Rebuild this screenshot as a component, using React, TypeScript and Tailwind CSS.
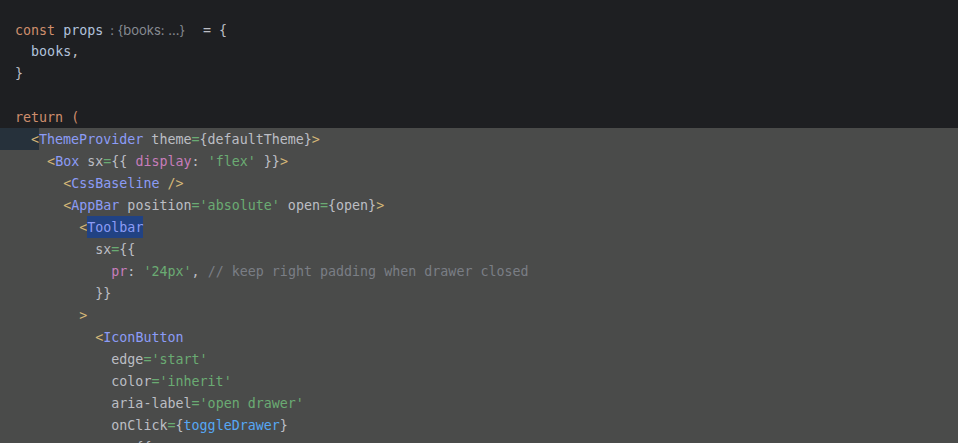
import React from 'react';

type Tok = [string, string];

// token colours (JetBrains dark)
const kw = 'text-[#cf8e6d]';
const vr = 'text-[#b1c2dc]';
const pl = 'text-[#bcbec4]';
const br = 'text-[#d5b778]';
const tg = 'text-[#8c9cf6]';
const eq = 'text-[#6aab73]';
const st = 'text-[#6aab73]';
const pp = 'text-[#c77dbb]';
const fn = 'text-[#56a8f5]';
const cm = 'text-[#7a7e85]';

const grayLines: Tok[][] = [
    [['    ', pl], ['<', br], ['Box', tg], [' sx', pl], ['=', eq], ['{{ ', pl], ['display', pp], [': ', pl], ["'flex'", st], [' }}', pl], ['>', br]],
    [['      ', pl], ['<', br], ['CssBaseline', tg], [' ', pl], ['/>', br]],
    [['      ', pl], ['<', br], ['AppBar', tg], [' position', pl], ['=', eq], ["'absolute'", st], [' open', pl], ['=', eq], ['{open}', pl], ['>', br]],
];

const afterToolbar: Tok[][] = [
    [['          sx', pl], ['=', eq], ['{{', pl]],
    [['            ', pl], ['pr', pp], [': ', pl], ["'24px'", st], [', ', pl], ['// keep right padding when drawer closed', cm]],
    [['          }}', pl]],
    [['        ', pl], ['>', br]],
    [['          ', pl], ['<', br], ['IconButton', tg]],
    [['            edge', pl], ['=', eq], ["'start'", st]],
    [['            color', pl], ['=', eq], ["'inherit'", st]],
    [['            aria-label', pl], ['=', eq], ["'open drawer'", st]],
    [['            onClick', pl], ['=', eq], ['{', pl], ['toggleDrawer', fn], ['}', pl]],
    [['            sx', pl], ['=', eq], ['{{', pl]],
];

function Line({ toks }: { toks: Tok[] }) {
    return (
        <div className="h-[22px] leading-[24px] pl-[15px] whitespace-pre">
            {toks.map(([t, c], i) => (
                <span key={i} className={c}>{t}</span>
            ))}
        </div>
    );
}

export default function App() {
    return (
        <div
            className="w-[958px] h-[443px] overflow-hidden bg-[#1e1f22] text-[13.33px] leading-[24px]"
            style={{ fontFamily: '"DejaVu Sans Mono", "Liberation Mono", monospace' }}
        >
            <div className="pt-[18px]">
                <div className="h-[22px] pl-[15px] whitespace-pre">
                    <span className={kw}>const </span>
                    <span className={vr}>props</span>
                    <span
                        className="ml-[7px] mr-[10px] text-[13px] text-[#868a91]"
                        style={{ fontFamily: 'Inter, "Noto Sans", sans-serif' }}
                    >
                        : {'{'}books: ...{'}'}
                    </span>
                    <span className={pl}> = {'{'}</span>
                </div>
                <Line toks={[['  ', pl], ['books', vr], [',', pl]]} />
                <Line toks={[['}', pl]]} />
                <div className="h-[22px]" />
                <Line toks={[['return ', kw], ['(', kw]]} />
            </div>

            <div className="bg-[#4a4b4a]">
                <div className="h-[22px] flex whitespace-pre">
                    <div className="w-[39px] bg-[#26313b] pl-[15px]">
                        <span className={br}>{'  <'}</span>
                    </div>
                    <div>
                        <span className={tg}>ThemeProvider</span>
                        <span className={pl}> theme</span>
                        <span className={eq}>=</span>
                        <span className={pl}>{'{defaultTheme}'}</span>
                        <span className={br}>&gt;</span>
                    </div>
                </div>
                {grayLines.map((l, i) => (
                    <Line key={i} toks={l} />
                ))}
                <div className="h-[22px] flex whitespace-pre pl-[15px]">
                    <span className={pl}>{'        '}</span>
                    <span className={br}>&lt;</span>
                    <span className={`${tg} bg-[#214283] h-[22px]`}>Toolbar</span>
                </div>
                {afterToolbar.map((l, i) => (
                    <Line key={i} toks={l} />
                ))}
            </div>
        </div>
    );
}
